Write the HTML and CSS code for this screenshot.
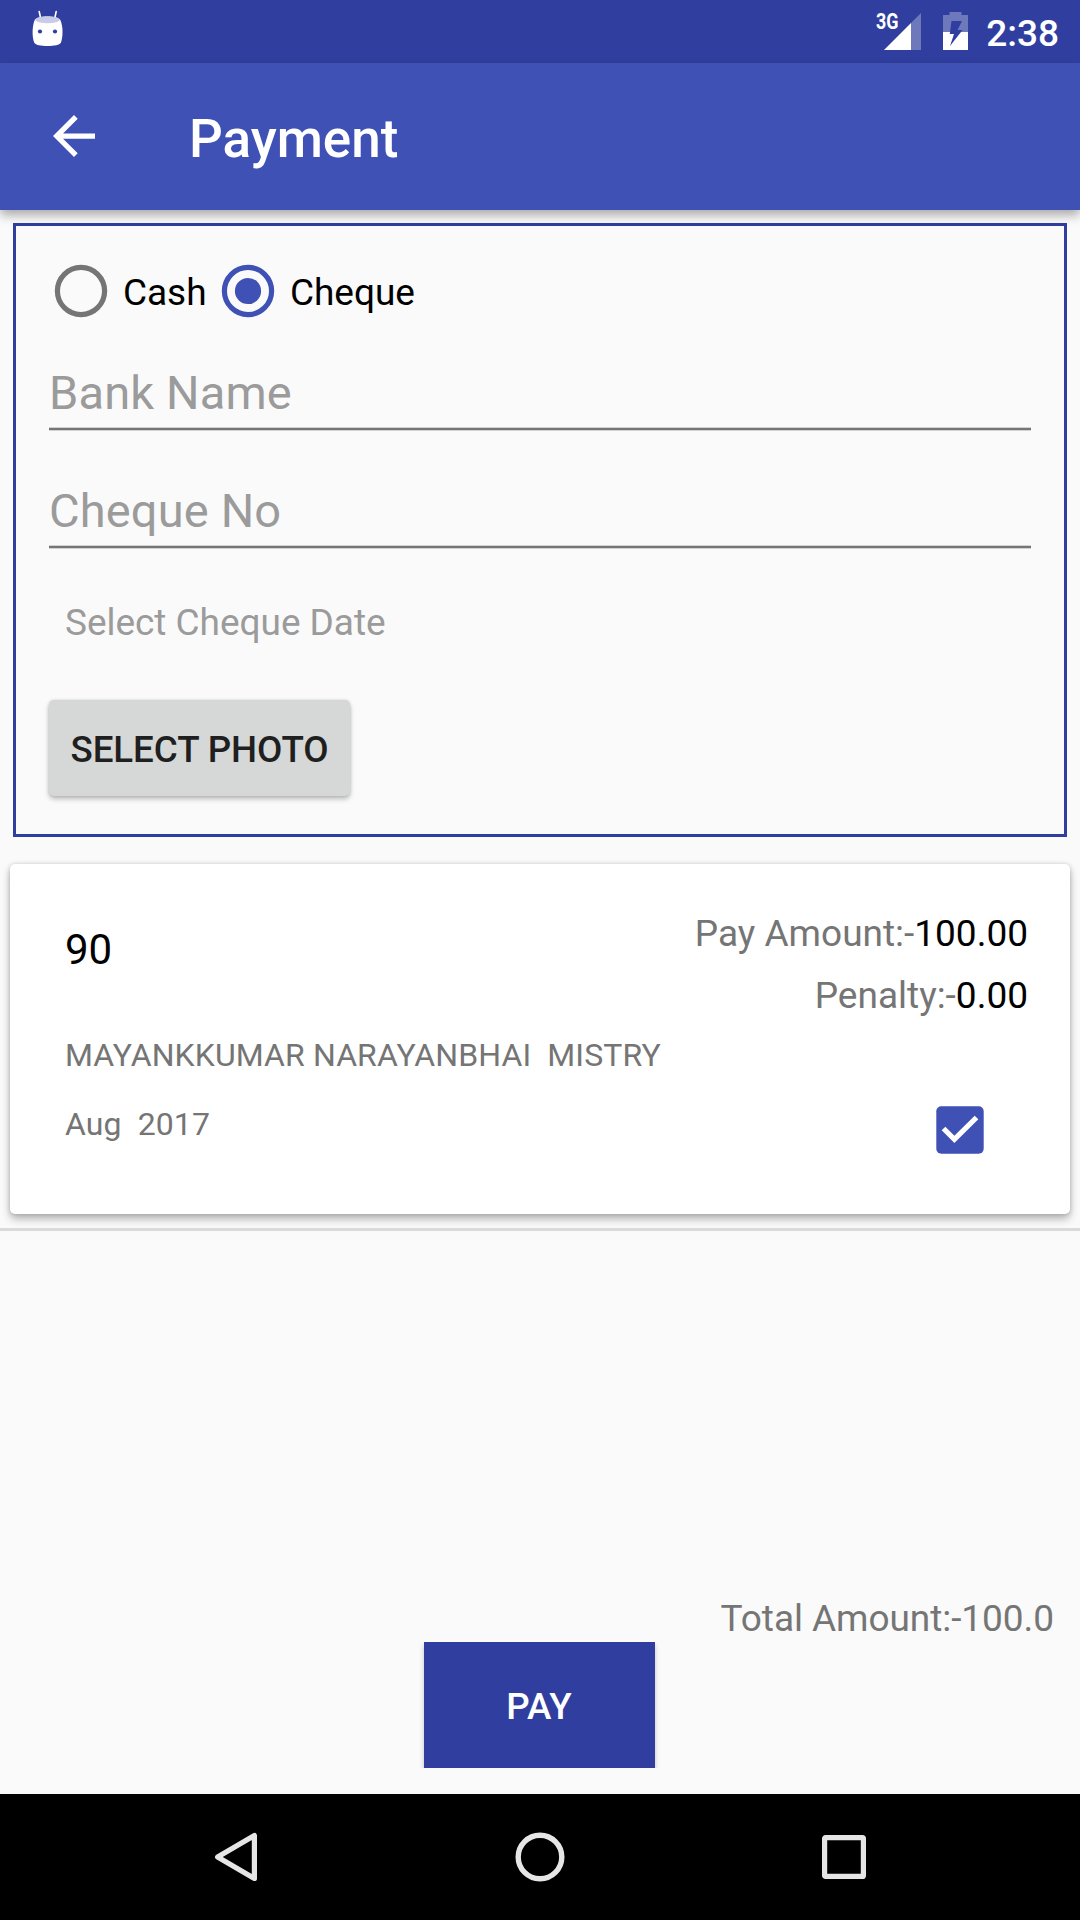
FILE: index.html
```html
<!DOCTYPE html>
<html lang="en">
<head>
<meta charset="utf-8">
<title>Payment</title>
<link rel="stylesheet" href="styles.css">
</head>
<body>
<div class="screen">
  <header class="status-bar">
    <svg class="robot" width="32" height="38" viewBox="0 0 32 38">
      <path d="M7.2 1.5 8.6 8M24.2 1.5 22.8 8" stroke="#fff" stroke-width="1.6" stroke-linecap="round"/>
      <path d="M2.8 9.8C7.5 5.3 23.5 5.3 28.2 9.8C31.3 16 31.1 27 29 32.5C27.5 37.3 3.5 37.3 2.2 32.5C0 27 0 16 2.8 9.8Z" fill="#fff"/>
      <ellipse cx="15.5" cy="9.8" rx="12.2" ry="3.5" fill="#c8cce6"/>
      <circle cx="8" cy="21.5" r="2.1" fill="#303f9f"/>
      <circle cx="23" cy="21.5" r="2.1" fill="#303f9f"/>
    </svg>
    <div class="status-right">
      <svg class="signal" width="48" height="46" viewBox="-2 -6 48 46">
        <path d="M46 1V38H36V11Z" fill="#fff" fill-opacity=".3"/>
        <path d="M9 38 36 11V38Z" fill="#fff"/>
        <text class="network" x="1" y="17.4" textLength="22.5" lengthAdjust="spacingAndGlyphs">3G</text>
      </svg>
      <svg class="battery" width="25" height="38" viewBox="0 0 25 38">
        <path d="M6.5 0H18.5V3H25V20H18L19.5 18H14.5L19 9H8.5L7 20H0V3H6.5Z" fill="#fff" fill-opacity=".3"/>
        <path d="M0 20H7L6.8 22H11L7 34 18 20H25V38H0Z" fill="#fff"/>
      </svg>
      <span class="clock">2:38</span>
    </div>
  </header>

  <div class="toolbar">
    <svg class="back" width="42" height="42" viewBox="0 0 16 16">
      <path d="M16 7H3.83L9.42 1.41 8 0 0 8 8 16 9.41 14.59 3.83 9H16Z" fill="#fff"/>
    </svg>
    <h1 class="title">Payment</h1>
  </div>

  <main class="content">
    <section class="panel">
      <div class="radios">
        <div class="radio">
          <svg width="54" height="54" viewBox="0 0 54 54"><circle cx="27" cy="27" r="23.6" fill="none" stroke="#757575" stroke-width="5.2"/></svg>
          <span class="radio-label cash">Cash</span>
        </div>
        <div class="radio">
          <svg width="54" height="54" viewBox="0 0 54 54"><circle cx="27" cy="27" r="23.6" fill="none" stroke="#3f51b5" stroke-width="5.2"/><circle cx="27" cy="27" r="13.1" fill="#3f51b5"/></svg>
          <span class="radio-label">Cheque</span>
        </div>
      </div>
      <div class="field">Bank Name</div>
      <div class="field second">Cheque No</div>
      <div class="date">Select Cheque Date</div>
      <button class="photo">SELECT PHOTO</button>
    </section>

    <section class="card">
      <div class="card-top">
        <div class="number">90</div>
        <div class="amounts">
          <div>Pay Amount:-<span class="value">100.00</span></div>
          <div>Penalty:-<span class="value">0.00</span></div>
        </div>
      </div>
      <div class="member">MAYANKKUMAR NARAYANBHAI  MISTRY</div>
      <div class="card-bottom">
        <div class="month">Aug  2017</div>
        <svg class="check" width="48" height="48" viewBox="0 0 48 48">
          <rect x=".3" y=".3" width="47.4" height="47.4" rx="5" fill="#3f51b5"/>
          <path d="M7.5 22.5 18.4 33.4 40.5 11.5" fill="none" stroke="#fff" stroke-width="5.2"/>
        </svg>
      </div>
    </section>
    <div class="divider"></div>

    <footer class="footer">
      <div class="total">Total Amount:-100.0</div>
      <div class="pay-wrap"><button class="pay">PAY</button></div>
    </footer>
  </main>

  <nav class="nav-bar">
    <svg width="50" height="52" viewBox="0 0 50 52"><path d="M43.4 4.5V47.5L6.6 26Z" fill="none" stroke="#e6e6e6" stroke-width="5.2" stroke-linejoin="round"/></svg>
    <svg width="50" height="52" viewBox="0 0 50 52"><circle cx="25" cy="26" r="21.8" fill="none" stroke="#e6e6e6" stroke-width="5.4"/></svg>
    <svg width="50" height="52" viewBox="0 0 50 52"><rect x="5.6" y="6.6" width="38.8" height="38.8" rx="1" fill="none" stroke="#e6e6e6" stroke-width="5.2" stroke-linejoin="round"/></svg>
  </nav>
</div>
</body>
</html>
```
FILE: styles.css
```css
* {
  box-sizing: border-box;
}

body {
  margin: 0;
  background: #fafafa;
  font-family: Roboto, "Liberation Sans", sans-serif;
  font-size: 37px;
  color: #000;
}

svg {
  display: block;
  flex: none;
}

button {
  border: 0;
  padding: 0;
  font: inherit;
  font-size: 36.75px;
  font-weight: 500;
}

.screen {
  width: 1080px;
  height: 1920px;
  display: flex;
  flex-direction: column;
  overflow: hidden;
}

.status-bar {
  flex: none;
  height: 63px;
  padding: 10px 21px 0 32px;
  display: flex;
  justify-content: space-between;
  background: #303f9f;
}

.status-right {
  display: flex;
  color: #fff;
}

.signal {
  margin: -4px 22px 0 0;
}

.network {
  font-size: 21.5px;
  font-weight: 700;
  fill: #fff;
}

.battery {
  margin: 2px 18px 0 0;
}

.clock {
  padding-top: 1px;
  line-height: 46px;
  font-weight: 500;
}

.toolbar {
  position: relative;
  z-index: 1;
  flex: none;
  height: 147px;
  padding-left: 53px;
  display: flex;
  align-items: center;
  background: #3f51b5;
  box-shadow: 0 5px 10px rgba(0, 0, 0, 0.33);
}

.back {
  margin-top: -1px;
}

.title {
  margin: 5px 0 0 94px;
  font-size: 53px;
  font-weight: 500;
  line-height: 62px;
  color: #fff;
}

.content {
  flex: 1;
  padding-top: 13px;
  display: flex;
  flex-direction: column;
}

.panel {
  flex: none;
  height: 614px;
  margin: 0 13px;
  padding: 23px 33px 0;
  border: 3px solid #303f9f;
}

.radios {
  height: 84px;
  display: flex;
  align-items: center;
}

.radio {
  display: flex;
  align-items: center;
  padding-left: 5px;
}

.radio-label {
  padding: 3px 0 0 15px;
  line-height: 44px;
  letter-spacing: -0.05px;
}

.cash {
  width: 108px;
}

.field {
  height: 98px;
  padding-top: 32px;
  font-size: 47px;
  line-height: 55px;
  letter-spacing: 0.15px;
  color: #9b9b9b;
  background: linear-gradient(#d2d2d2 0 1px, #757575 1px 3px, #d2d2d2 3px) bottom / 100% 4px no-repeat;
}

.second {
  margin-top: 20px;
}

.date {
  margin-top: 52px;
  padding-left: 16px;
  line-height: 44px;
  letter-spacing: -0.04px;
  color: #9b9b9b;
}

.photo {
  display: block;
  width: 301px;
  height: 96px;
  margin-top: 55px;
  padding-top: 3px;
  border-radius: 5px;
  background: #d6d8d7;
  color: #1e1f1e;
  letter-spacing: -0.08px;
  box-shadow: 0 3px 5px rgba(0, 0, 0, 0.25), 0 0 3px rgba(0, 0, 0, 0.12);
}

.card {
  flex: none;
  height: 350px;
  margin: 27px 10px 14px;
  padding: 39px 42px 0 55px;
  border-radius: 5px;
  background: #fff;
  box-shadow: 0 5px 9px rgba(0, 0, 0, 0.28), 0 0 4px rgba(0, 0, 0, 0.16);
}

.card-top {
  display: flex;
  justify-content: space-between;
}

.number {
  padding-top: 16px;
  font-size: 42px;
  line-height: 62px;
}

.amounts {
  text-align: right;
  line-height: 62px;
  color: #757575;
}

.value {
  color: #000;
}

.member,
.month {
  font-size: 32px;
  line-height: 44px;
  letter-spacing: 0.1px;
  color: #757575;
  white-space: pre;
}

.member {
  margin-top: 6px;
}

.card-bottom {
  margin-top: 25px;
  padding-right: 44px;
  display: flex;
  justify-content: space-between;
}

.check {
  margin-top: 4px;
}

.divider {
  flex: none;
  height: 3px;
  background: #dadada;
}

.footer {
  margin-top: auto;
  padding-bottom: 26px;
}

.total {
  padding-right: 26px;
  text-align: right;
  line-height: 44px;
  letter-spacing: -0.06px;
  color: #757575;
}

.pay-wrap {
  margin-top: 1px;
  padding: 0 424px;
  overflow: hidden;
}

.pay {
  display: block;
  width: 231px;
  height: 126px;
  padding: 3px 1px 0 0;
  background: #303f9f;
  color: #fff;
  box-shadow: 0 3px 5px rgba(0, 0, 0, 0.22);
}

.nav-bar {
  flex: none;
  height: 126px;
  padding: 0 211px;
  display: flex;
  justify-content: space-between;
  align-items: center;
  background: #000;
}
```
